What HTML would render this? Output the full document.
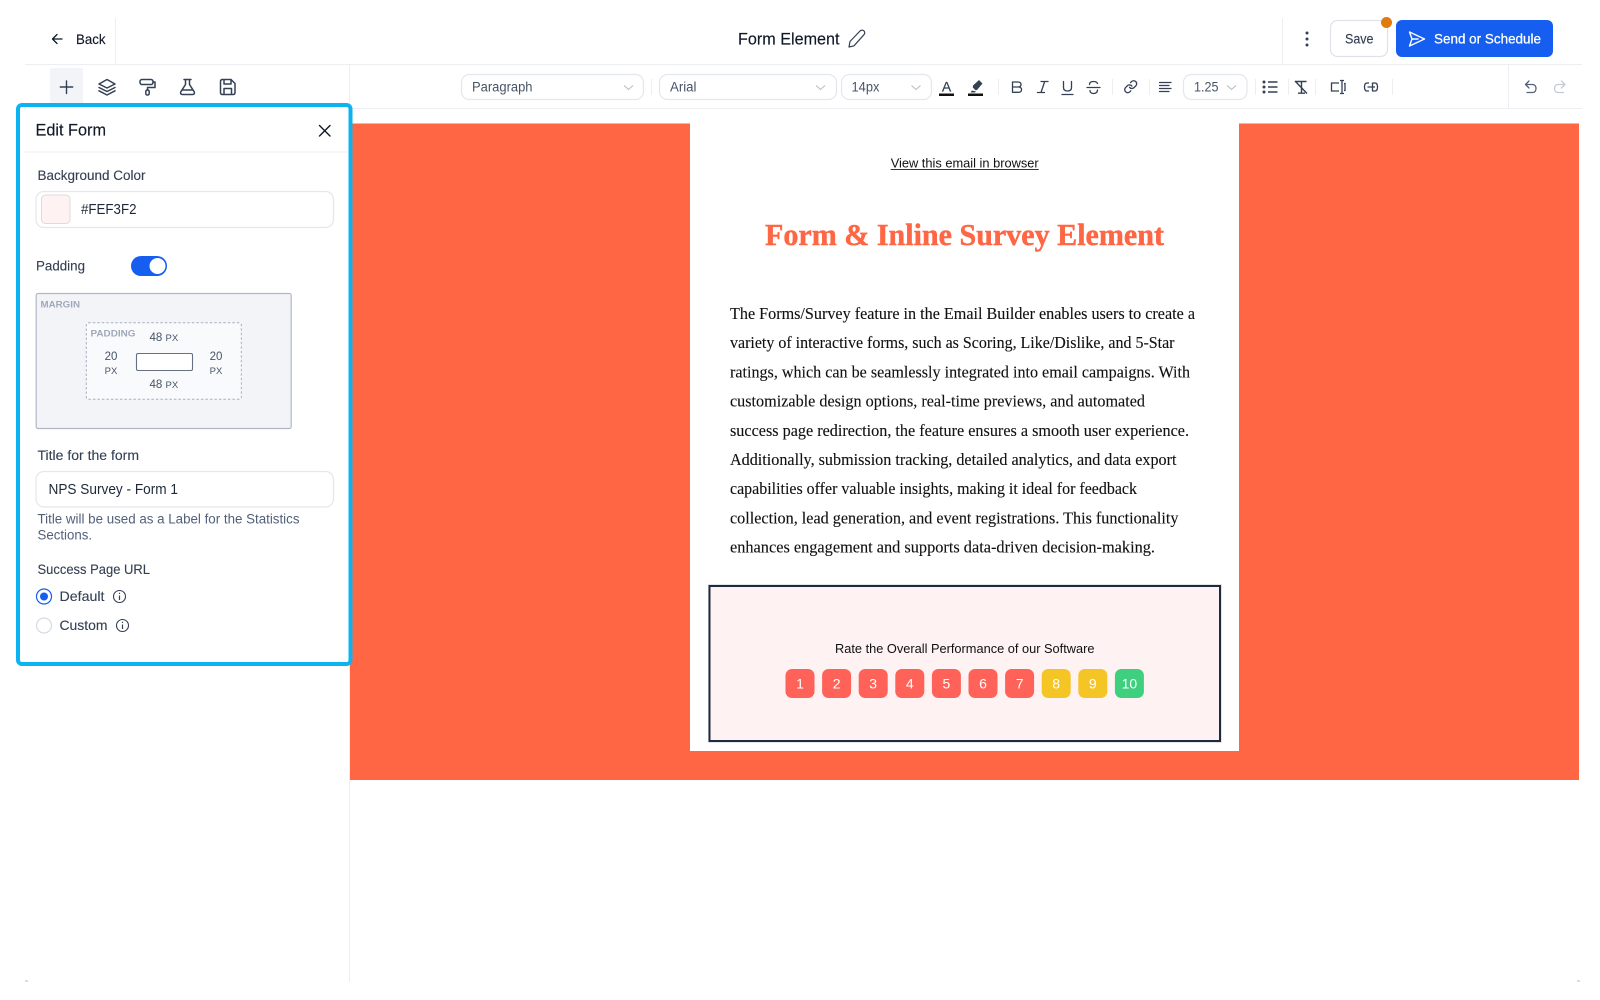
<!DOCTYPE html>
<html lang="en"><head><meta charset="utf-8"><title>Form Element</title>
<style>
html,body{margin:0;padding:0;background:#fff;width:1600px;height:1000px;overflow:hidden}
svg{display:block;font-family:"Liberation Sans",Arial,sans-serif;filter:blur(.3px)}
.ic{fill:none;stroke:#344054;stroke-width:1.5;stroke-linecap:round;stroke-linejoin:round}
.sel{fill:#fff;stroke:#e4e7ec;stroke-width:1.2}
.chev{fill:none;stroke:#b4bac6;stroke-width:1}
.dv{stroke:#eceef2;stroke-width:1}
.s{font-family:"Liberation Serif",Georgia,serif;font-size:17px;fill:#111;stroke:#111;stroke-width:.12}
.l{font-size:13.5px;fill:#344054;stroke:#344054;stroke-width:.12}
.m{stroke-width:.15}
.num{font-size:14px;fill:#fff;text-anchor:middle}
</style></head><body>
<svg width="1600" height="1000" viewBox="0 0 1600 1000" xmlns="http://www.w3.org/2000/svg">
<rect width="1600" height="1000" fill="#fff"/>

<!-- frame lines -->
<path class="dv" d="M25 64.5H1582M350 108.5H1582M115.5 18V64M1282.500 18V64M349.500 64V982M1508.500 64V108"/>
<path d="M25 981h3M1577 981h3" stroke="#bbb" stroke-width="1"/>

<!-- top bar -->
<path fill="none" stroke="#101828" stroke-width="1.300" stroke-linecap="round" stroke-linejoin="round" d="M62 39H53M57 34.500L52.500 39L57 43.500"/>
<text x="76" y="44" font-size="14" fill="#101828" stroke="#101828" class="m" textLength="29.500" lengthAdjust="spacingAndGlyphs">Back</text>
<text x="738" y="44.500" font-size="16.500" fill="#101828" stroke="#101828" class="m" textLength="101.500" lengthAdjust="spacingAndGlyphs">Form Element</text>
<path fill="none" stroke="#344054" stroke-width="1.200" stroke-linejoin="round" d="M849 47L850 41.500L860 31C861.500 29.700 863.500 30 864.300 31.300C865 32.500 864.700 34 863.500 35.200L854 45.800Z"/>
<circle cx="1307" cy="33" r="1.500" fill="#344054"/><circle cx="1307" cy="39" r="1.500" fill="#344054"/><circle cx="1307" cy="45" r="1.500" fill="#344054"/>
<rect x="1330.500" y="20.500" width="57" height="36" rx="7" fill="#fff" stroke="#dfe2e8" stroke-width="1.200"/>
<text x="1345" y="43.500" font-size="13.500" fill="#344054" stroke="#344054" class="m" textLength="28.500" lengthAdjust="spacingAndGlyphs">Save</text>
<circle cx="1386.500" cy="22.500" r="5.500" fill="#e07b0c"/>
<rect x="1396" y="20" width="157" height="37" rx="6" fill="#155eef"/>
<path fill="none" stroke="#fff" stroke-width="1.400" stroke-linejoin="round" stroke-linecap="round" d="M1409.500 32L1424.500 39L1409.500 46L1412 39ZM1412 39H1418"/>
<text x="1434" y="43.500" font-size="13.500" fill="#fff" stroke="#fff" stroke-width=".25" textLength="107" lengthAdjust="spacingAndGlyphs">Send or Schedule</text>

<!-- left toolbar -->
<rect x="50" y="68" width="33" height="36" rx="2" fill="#f2f4f7"/>
<path fill="none" stroke="#344054" stroke-width="1.400" stroke-linecap="round" d="M66.500 81V93.500M60.300 87H72.700"/>
<g class="ic">
<path d="M107 79.500L115 84L107 88L99 84Z"/>
<path d="M99 87.500L107 91.500L115 87.500"/>
<path d="M99 90.800L107 95L115 90.800"/>
<rect x="140" y="79.500" width="13" height="5" rx="2"/>
<path d="M153 82H155V87.500H147.500V90"/>
<rect x="145.800" y="90" width="3.400" height="5" rx="1.500"/>
<path d="M184 79.500H191M185.500 79.500V84.500L180.800 91.800C180 93.500 181 94.500 182.500 94.500H192.500C194 94.500 195 93.500 194.200 91.800L189.500 84.500V79.500M182 90H193"/>
<path d="M220.500 81.500C220.500 80.300 221.300 79.500 222.500 79.500H231L235 83.500V92.500C235 93.700 234.200 94.500 233 94.500H222.500C221.300 94.500 220.500 93.700 220.500 92.500ZM224 79.500V84H231V79.500M224 94.500V88.500H231.500V94.500"/>
</g>

<!-- format toolbar -->
<rect class="sel" x="461.500" y="74.500" width="182" height="25" rx="8"/>
<text x="472" y="91.500" font-size="13.500" fill="#475467" textLength="60.500" lengthAdjust="spacingAndGlyphs">Paragraph</text>
<path class="chev" d="M624 85.500l4.500 4 4.500-4"/>
<path class="dv" d="M651.500 79V95M998.500 79V95M1112.500 79V95M1149.500 79V95M1255.500 79V95M1288.500 79V95M1315.500 79V95M1392.500 79V95"/>
<rect class="sel" x="659.500" y="74.500" width="177" height="25" rx="8"/>
<text x="670" y="91.500" font-size="13.500" fill="#475467" textLength="26.500" lengthAdjust="spacingAndGlyphs">Arial</text>
<path class="chev" d="M816 85.500l4.500 4 4.500-4"/>
<rect class="sel" x="841.500" y="74.500" width="90" height="25" rx="8"/>
<text x="851.500" y="91.500" font-size="13.500" fill="#475467" textLength="28" lengthAdjust="spacingAndGlyphs">14px</text>
<path class="chev" d="M911.500 85.500l4.500 4 4.500-4"/>
<text x="946.500" y="91.500" font-size="14" fill="#344054" stroke="#344054" stroke-width=".2" text-anchor="middle">A</text>
<rect x="939" y="93.500" width="15" height="2.500" fill="#111"/>
<path fill="#344054" d="M972 90.500l-1.500 2h4.500l1-1zM973 85.500l6-5.500 3.500 3.500-5.500 6.500-1.500.2-2.700-2.700z"/>
<rect x="968" y="93.500" width="15" height="2.500" fill="#111"/>

<g fill="none" stroke="#344054" stroke-width="1.300" stroke-linecap="round" stroke-linejoin="round">
<path d="M1012.500 82H1018C1020 82 1021 83 1021 84.500C1021 86 1020 87 1018 87H1012.500ZM1012.500 87H1018.500C1020.500 87 1021.500 88.200 1021.500 89.700C1021.500 91.200 1020.500 92.300 1018.500 92.300H1012.500Z"/>
<path d="M1041 81.500H1048M1037.500 92.500H1044.500M1044.700 81.500L1041 92.500"/>
<path d="M1063.500 81.500V87.500C1063.500 90 1065 91 1067.500 91C1070 91 1071.500 90 1071.500 87.500V81.500M1062 94.500H1073"/>
<path d="M1087 87.500H1100M1097.500 83.500C1097 82 1095.500 81.500 1093.500 81.500C1091 81.500 1089.500 82.500 1089.500 84.500M1090 90.500C1090 92.500 1091.500 93.500 1093.500 93.500C1095.500 93.500 1097.500 92.500 1097.500 90"/>
<g transform="translate(1123.500 79.500) scale(.6)" stroke-width="2.200"><path d="M10 13a5 5 0 0 0 7.540.54l3-3a5 5 0 0 0-7.070-7.070l-1.720 1.710"/><path d="M14 11a5 5 0 0 0-7.540-.54l-3 3a5 5 0 0 0 7.070 7.070l1.710-1.710"/></g>
<path d="M1159.500 82.500H1171M1159.500 85.500H1169M1159.500 88.500H1171M1159.500 91.500H1169"/>
</g>
<rect class="sel" x="1183.500" y="74.500" width="63.500" height="25" rx="8"/>
<text x="1194" y="91.500" font-size="13.500" fill="#475467" textLength="24.500" lengthAdjust="spacingAndGlyphs">1.25</text>
<path class="chev" d="M1227 85.500l4.500 4 4.500-4"/>

<g fill="#344054">
<circle cx="1264" cy="82" r="1.500"/><circle cx="1264" cy="87" r="1.500"/><circle cx="1264" cy="92" r="1.500"/>
</g>
<path fill="none" stroke="#344054" stroke-width="1.400" d="M1268 82H1277.500M1268 87H1277.500M1268 92H1277.500"/>
<path fill="none" stroke="#344054" stroke-width="1.400" d="M1295 81.500H1306.500M1301.500 81.500V93M1298 93.200H1305M1295 81L1307 93.500"/>
<path fill="none" stroke="#344054" stroke-width="1.300" d="M1339 83H1331.500V91H1339M1340 80.500H1344M1340 93.500H1344M1342 80.500V93.500M1344 83.500H1345V90.500H1344"/>
<path fill="none" stroke="#344054" stroke-width="1.300" d="M1369 83H1367C1365 83 1364.500 85 1364.500 87C1364.500 89 1365 91 1367 91H1369M1373 83H1375C1377 83 1377.500 85 1377.500 87C1377.500 89 1377 91 1375 91H1373M1367.500 87H1375M1372.500 82.500V91.500"/>
<path fill="none" stroke="#52607a" stroke-width="1.300" stroke-linecap="round" stroke-linejoin="round" d="M1529 81L1525.500 84.500L1529 88M1525.500 84.500H1532.500C1535 84.500 1536 86.500 1536 88.500C1536 90.500 1535 92.500 1532.500 92.500H1527"/>
<path fill="none" stroke="#c5cad3" stroke-width="1.300" stroke-linecap="round" stroke-linejoin="round" d="M1561.500 81L1565 84.500L1561.500 88M1565 84.500H1558C1555.500 84.500 1554.500 86.500 1554.500 88.500C1554.500 90.500 1555.500 92.500 1558 92.500H1563.500"/>

<!-- email canvas -->
<rect x="350" y="123.500" width="1229" height="656.500" fill="#ff6644"/>
<rect x="690" y="123.500" width="549" height="627.500" fill="#fff"/>
<text x="890.700" y="167.500" font-size="12.800" fill="#111" textLength="148" lengthAdjust="spacingAndGlyphs">View this email in browser</text>
<rect x="890.700" y="169" width="148" height="1" fill="#333"/>
<text x="765" y="245" font-family="'Liberation Serif',Georgia,serif" font-weight="700" font-size="30.500" fill="#ff6644" stroke="#ff6644" stroke-width=".45" textLength="399" lengthAdjust="spacingAndGlyphs">Form &amp; Inline Survey Element</text>
<text class="s" x="730" y="319" textLength="465" lengthAdjust="spacingAndGlyphs">The Forms/Survey feature in the Email Builder enables users to create a</text>
<text class="s" x="730" y="348.200" textLength="444.500" lengthAdjust="spacingAndGlyphs">variety of interactive forms, such as Scoring, Like/Dislike, and 5-Star</text>
<text class="s" x="730" y="377.400" textLength="460" lengthAdjust="spacingAndGlyphs">ratings, which can be seamlessly integrated into email campaigns. With</text>
<text class="s" x="730" y="406.600" textLength="415" lengthAdjust="spacingAndGlyphs">customizable design options, real-time previews, and automated</text>
<text class="s" x="730" y="435.800" textLength="459" lengthAdjust="spacingAndGlyphs">success page redirection, the feature ensures a smooth user experience.</text>
<text class="s" x="730" y="465" textLength="446.500" lengthAdjust="spacingAndGlyphs">Additionally, submission tracking, detailed analytics, and data export</text>
<text class="s" x="730" y="494.200" textLength="407" lengthAdjust="spacingAndGlyphs">capabilities offer valuable insights, making it ideal for feedback</text>
<text class="s" x="730" y="523.400" textLength="448.500" lengthAdjust="spacingAndGlyphs">collection, lead generation, and event registrations. This functionality</text>
<text class="s" x="730" y="552.600" textLength="425" lengthAdjust="spacingAndGlyphs">enhances engagement and supports data-driven decision-making.</text>

<!-- form block -->
<rect x="708" y="584" width="514" height="159" fill="#c9ccd2" opacity=".5"/>
<rect x="709.500" y="586" width="510.500" height="155" fill="#fef3f2" stroke="#1e2b3f" stroke-width="2"/>
<text x="835" y="653" font-size="13.300" fill="#111" textLength="259.500" lengthAdjust="spacingAndGlyphs">Rate the Overall Performance of our Software</text>
<g>
<rect x="785.500" y="669" width="29" height="29" rx="6.500" fill="#ff6259"/>
<rect x="822.100" y="669" width="29" height="29" rx="6.500" fill="#ff6259"/>
<rect x="858.700" y="669" width="29" height="29" rx="6.500" fill="#ff6259"/>
<rect x="895.300" y="669" width="29" height="29" rx="6.500" fill="#ff6259"/>
<rect x="931.900" y="669" width="29" height="29" rx="6.500" fill="#ff6259"/>
<rect x="968.500" y="669" width="29" height="29" rx="6.500" fill="#ff6259"/>
<rect x="1005.100" y="669" width="29" height="29" rx="6.500" fill="#ff6259"/>
<rect x="1041.700" y="669" width="29" height="29" rx="6.500" fill="#f5c526"/>
<rect x="1078.300" y="669" width="29" height="29" rx="6.500" fill="#f5c526"/>
<rect x="1114.900" y="669" width="29" height="29" rx="6.500" fill="#3ecf7f"/>
<text class="num" x="800" y="688.500">1</text><text class="num" x="836.600" y="688.500">2</text><text class="num" x="873.200" y="688.500">3</text><text class="num" x="909.800" y="688.500">4</text><text class="num" x="946.400" y="688.500">5</text><text class="num" x="983" y="688.500">6</text><text class="num" x="1019.600" y="688.500">7</text><text class="num" x="1056.200" y="688.500">8</text><text class="num" x="1092.800" y="688.500">9</text><text class="num" x="1129.400" y="688.500">10</text>
</g>

<!-- edit panel -->
<rect x="18" y="105" width="332.500" height="559" rx="4" fill="#fff" stroke="#0bb4f0" stroke-width="4"/>
<text x="35.500" y="135.500" font-size="17" fill="#101828" stroke="#101828" class="m" textLength="70.500" lengthAdjust="spacingAndGlyphs">Edit Form</text>
<path fill="none" stroke="#101828" stroke-width="1.400" stroke-linecap="round" d="M319.500 125.500L330 136M330 125.500L319.500 136"/>
<path class="dv" d="M25 152H348"/>
<text class="l" x="37.500" y="180" textLength="108" lengthAdjust="spacingAndGlyphs">Background Color</text>
<rect class="sel" x="36" y="191.500" width="297.500" height="36" rx="8"/>
<rect x="41.500" y="195" width="28.500" height="28.500" rx="4" fill="#fef3f2" stroke="#d9dce2"/>
<text x="81" y="214" font-size="14.500" fill="#1d2939" textLength="55.500" lengthAdjust="spacingAndGlyphs">#FEF3F2</text>
<text x="36" y="270.500" font-size="14" fill="#344054" stroke="#344054" stroke-width=".12" textLength="49" lengthAdjust="spacingAndGlyphs">Padding</text>
<rect x="131" y="256" width="36" height="20" rx="10" fill="#155eef"/>
<circle cx="157.500" cy="266" r="8" fill="#fff"/>

<rect x="36.200" y="293.500" width="255" height="135" rx="2" fill="#f2f4f8" stroke="#b0b8c8" stroke-width="1.200"/>
<text x="40.500" y="307.500" font-size="9.500" font-weight="700" fill="#a0a9ba" textLength="39.500" lengthAdjust="spacingAndGlyphs">MARGIN</text>
<rect x="86.300" y="322.800" width="155" height="76.500" rx="2" fill="#f9fafb" stroke="#a8b0c0" stroke-dasharray="2.500 2"/>
<text x="90.500" y="336.500" font-size="9.500" font-weight="700" fill="#a0a9ba" textLength="45" lengthAdjust="spacingAndGlyphs">PADDING</text>
<text x="149.500" y="341" font-size="11.500" fill="#475467">48</text><text x="165.500" y="341" font-size="9.500" fill="#475467">PX</text>
<text x="149.500" y="388" font-size="11.500" fill="#475467">48</text><text x="165.500" y="388" font-size="9.500" fill="#475467">PX</text>
<text x="111" y="360" font-size="11.500" fill="#475467" text-anchor="middle">20</text><text x="111" y="374" font-size="9.500" fill="#475467" text-anchor="middle">PX</text>
<text x="216" y="360" font-size="11.500" fill="#475467" text-anchor="middle">20</text><text x="216" y="374" font-size="9.500" fill="#475467" text-anchor="middle">PX</text>
<rect x="136.500" y="353.500" width="56" height="17" rx="1.500" fill="#fff" stroke="#667085" stroke-width="1.100"/>

<text class="l" x="37.500" y="460" textLength="101.500" lengthAdjust="spacingAndGlyphs">Title for the form</text>
<rect class="sel" x="36" y="471.500" width="297.500" height="35.500" rx="8"/>
<text x="48.500" y="494" font-size="14.500" fill="#1d2939" textLength="129.500" lengthAdjust="spacingAndGlyphs">NPS Survey - Form 1</text>
<text x="37.500" y="523.500" font-size="13.500" fill="#52607a" textLength="262" lengthAdjust="spacingAndGlyphs">Title will be used as a Label for the Statistics</text>
<text x="37.500" y="539.500" font-size="13.500" fill="#52607a" textLength="54.500" lengthAdjust="spacingAndGlyphs">Sections.</text>
<text class="l" x="37.500" y="574" textLength="112.500" lengthAdjust="spacingAndGlyphs">Success Page URL</text>
<circle cx="44" cy="596.500" r="7.500" fill="#fff" stroke="#155eef" stroke-width="1.200"/>
<circle cx="44" cy="596.500" r="4" fill="#155eef"/>
<text x="59.500" y="601" font-size="14" fill="#344054" stroke="#344054" stroke-width=".1" textLength="45" lengthAdjust="spacingAndGlyphs">Default</text>
<circle cx="119.500" cy="596.500" r="6" fill="none" stroke="#344054" stroke-width="1.100"/>
<path stroke="#344054" stroke-width="1.200" d="M119.500 595.500V600M119.500 592.800V594"/>
<circle cx="44" cy="625.500" r="7.500" fill="#fff" stroke="#d6dae2" stroke-width="1.200"/>
<text x="59.500" y="630" font-size="14" fill="#344054" stroke="#344054" stroke-width=".1" textLength="48" lengthAdjust="spacingAndGlyphs">Custom</text>
<circle cx="122.500" cy="625.500" r="6" fill="none" stroke="#344054" stroke-width="1.100"/>
<path stroke="#344054" stroke-width="1.200" d="M122.500 624.500V629M122.500 621.800V623"/>
</svg>
</body></html>
